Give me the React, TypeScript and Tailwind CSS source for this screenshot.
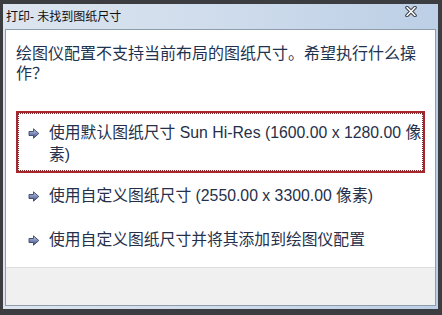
import React from 'react';

function LinkArrow() {
  return (
    <svg width="12" height="11" viewBox="0 0 12 11" className="shrink-0">
      <defs>
        <linearGradient id="arr" x1="0" y1="0" x2="0" y2="1">
          <stop offset="0" stopColor="#c9d3ea" />
          <stop offset="0.5" stopColor="#7d8cb8" />
          <stop offset="1" stopColor="#3e4c7c" />
        </linearGradient>
      </defs>
      <path d="M1 3.5 H5.5 V0.8 L10.8 5.5 L5.5 10.2 V7.5 H1 Z" fill="url(#arr)" stroke="#3a4468" strokeWidth="0.9" strokeLinejoin="round" />
    </svg>
  );
}

function CloseGlyph() {
  return (
    <svg width="12" height="11" viewBox="0 0 12 11">
      <path d="M2 1.5 L10 9.5 M10 1.5 L2 9.5" stroke="#3d3f44" strokeWidth="3.6" strokeLinecap="round" />
      <path d="M2 1.5 L10 9.5 M10 1.5 L2 9.5" stroke="#ffffff" strokeWidth="1.6" strokeLinecap="round" />
    </svg>
  );
}

interface OptionProps {
  text: string;
  focused?: boolean;
}

function CommandLink({ text, focused }: OptionProps) {
  if (focused) {
    return (
      <div className="ml-[10px] w-[409px] h-[62px] border-2 border-[#a8272d]">
        <div className="h-full border border-dotted border-[#7a2a2a] flex items-start pl-[9px] pt-[8px]">
          <div className="mt-[6px]">
            <LinkArrow />
          </div>
          <span className="ml-[9px] text-[15.8px] leading-[22px] text-[#26304a]">{text}</span>
        </div>
      </div>
    );
  }
  return (
    <div className="ml-[10px] w-[409px] h-[42px] flex items-center pl-[12px]">
      <LinkArrow />
      <span className="ml-[9px] text-[15.8px] leading-[22px] text-[#26304a]">{text}</span>
    </div>
  );
}

export default function App() {
  return (
    <div className="w-[442px] h-[315px] bg-[#3b3d40] pt-[4px] pl-[3px] overflow-hidden font-['Liberation_Sans','Noto_Sans_CJK_SC',sans-serif]">
      <div className="w-[435px] h-[305px] bg-gradient-to-r from-[#dce5ef] via-[#cfdcec] to-[#bccfe6] flex flex-col px-[2px] pb-[3px]">
        {/* Title bar */}
        <div className="h-[25px] flex items-center justify-between pl-[1px] pr-[19px]">
          <span className="text-[12px] leading-none text-[#111111]">打印- 未找到图纸尺寸</span>
          <div className="-mt-[10px]">
            <CloseGlyph />
          </div>
        </div>

        {/* Content */}
        <div className="flex-1 flex flex-col border border-[#8e9cac]">
          <div className="h-[237px] bg-white flex flex-col">
            <p className="pl-[10px] pr-[12px] pt-[12px] text-[16px] leading-[20px] text-[#1e3350] font-['Noto_Sans_CJK_SC',sans-serif]">
              绘图仪配置不支持当前布局的图纸尺寸。希望执行什么操作？
            </p>
            <div className="mt-[29px] flex flex-col gap-[2px]">
              <CommandLink focused text="使用默认图纸尺寸 Sun Hi-Res (1600.00 x 1280.00 像素)" />
              <CommandLink text="使用自定义图纸尺寸 (2550.00 x 3300.00 像素)" />
              <CommandLink text="使用自定义图纸尺寸并将其添加到绘图仪配置" />
            </div>
          </div>
          <div className="flex-1 bg-[#f0f0f0] border-t border-[#dedede]" />
        </div>
      </div>
    </div>
  );
}
